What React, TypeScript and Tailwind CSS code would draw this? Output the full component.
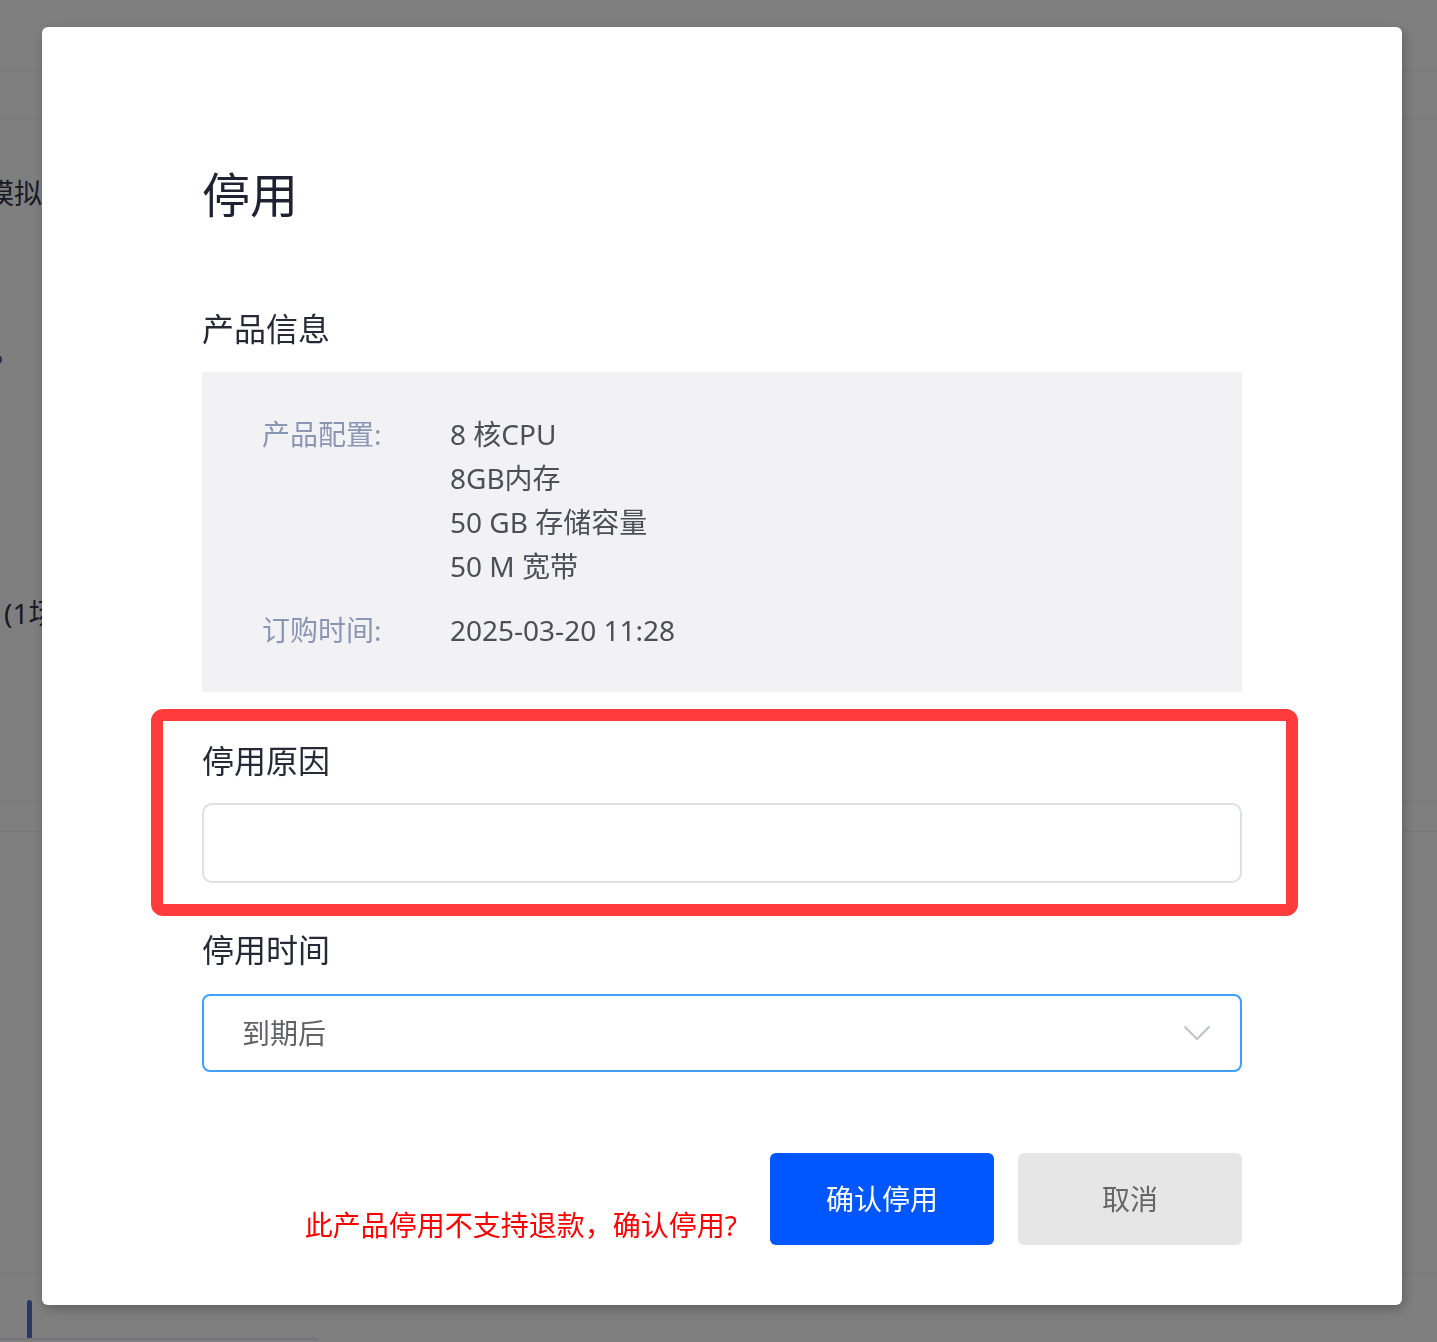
import { useState } from "react";

const font = { fontFamily: '"Noto Sans", "Noto Sans CJK SC", sans-serif' };

const specs = ["8 核CPU", "8GB内存", "50 GB 存储容量", "50 M 宽带"];

// 背景页面（被遮罩盖住，只露出左右两条边）
const BackgroundPage = () => (
  <div className="w-full h-[1342px] bg-white overflow-hidden text-[#333333]" style={font}>
    <div className="h-[71px] border-b border-[#eeeeee]" />
    <div className="h-[48px] border-b border-[#eeeeee]" />
    <div className="h-[683px] border-b border-[#eeeeee] flex flex-col">
      <p className="mt-[54px] -ml-[14px] text-[28px] leading-[40px] text-[#34344a]">模拟</p>
      <p className="mt-[118px] -ml-[8px] text-[28px] leading-[40px] text-[#34344a]">。</p>
      <p className="mt-[222px] ml-[4px] text-[28px] leading-[40px] text-[#34344a]">(1场</p>
    </div>
    <div className="h-[30px] border-b border-[#eeeeee]" />
    <div className="h-[442px] border-b border-[#eeeeee]" />
    <div className="flex items-end h-[66px]">
      <div className="w-[318px] border-b-2 border-[#e8eaf0] h-full pl-[27px] flex items-end">
        <div className="w-[5px] h-[38px] rounded-t-full bg-[#5470c6]" />
      </div>
    </div>
  </div>
);

const App = () => {
  const [reason, setReason] = useState("");

  return (
    <div className="relative w-full min-h-[1342px]">
      <BackgroundPage />

      <div className="fixed inset-0 bg-black/50 pl-[42px] pt-[27px]" style={font}>
        <div className="w-[1360px] h-[1278px] bg-white rounded-[6px] shadow-[2px_4px_12px_rgba(0,0,0,0.25)] px-[160px] pt-[136px] pb-[60px] flex flex-col">
          <h1 className="text-[48px] leading-[64px] text-[#1f2233]">停用</h1>

          <h2 className="mt-[80px] text-[32px] leading-[44px] text-[#262a36]">产品信息</h2>

          <div className="mt-[21px] bg-[#f2f2f5] pl-[60px] pr-[40px] py-[40px] text-[28px] leading-[44px]">
            <div className="flex">
              <span className="w-[188px] shrink-0 text-[#8b96b4]">产品配置:</span>
              <div className="flex flex-col text-[#4a4f58]">
                {specs.map(s => <span key={s}>{s}</span>)}
              </div>
            </div>
            <div className="flex mt-[20px]">
              <span className="w-[188px] shrink-0 text-[#8b96b4]">订购时间:</span>
              <span className="text-[#4a4f58]">2025-03-20 11:28</span>
            </div>
          </div>

          {/* 停用原因（带红色标注框） */}
          <div className="relative mt-[47px]">
            <h2 className="text-[32px] leading-[44px] text-[#262a36]">停用原因</h2>
            <input
              value={reason}
              onChange={e => setReason(e.target.value)}
              className="mt-[20px] w-full h-[80px] border-2 border-[#dcdfe6] rounded-[10px] px-[38px] text-[28px] text-[#606266] outline-none"
            />
            <div className="absolute -left-[51px] -right-[56px] -top-[30px] -bottom-[33px] border-[12px] border-[#ff3b3b] rounded-[12px] pointer-events-none" />
          </div>

          <h2 className="mt-[45px] text-[32px] leading-[44px] text-[#262a36]">停用时间</h2>
          <div className="mt-[22px] h-[80px] border-2 border-[#409eff] rounded-[8px] pl-[38px] pr-[29px] flex items-center justify-between">
            <span className="text-[28px] text-[#606266]">到期后</span>
            <svg width="28" height="16" viewBox="0 0 28 16" fill="none">
              <path d="M1.5 1.5 L14 14 L26.5 1.5" stroke="#c0c4cc" strokeWidth="2.2" />
            </svg>
          </div>

          <div className="mt-[81px] flex items-end justify-end">
            <span className="text-[28px] leading-[40px] text-[#ff0000] mr-[33px]">此产品停用不支持退款，确认停用?</span>
            <button className="w-[224px] h-[92px] rounded-[6px] bg-[#0057ff] text-white text-[28px]">确认停用</button>
            <button className="ml-[24px] w-[224px] h-[92px] rounded-[6px] bg-[#e6e6e6] text-[#666666] text-[28px]">取消</button>
          </div>
        </div>
      </div>
    </div>
  );
};

export default App;
